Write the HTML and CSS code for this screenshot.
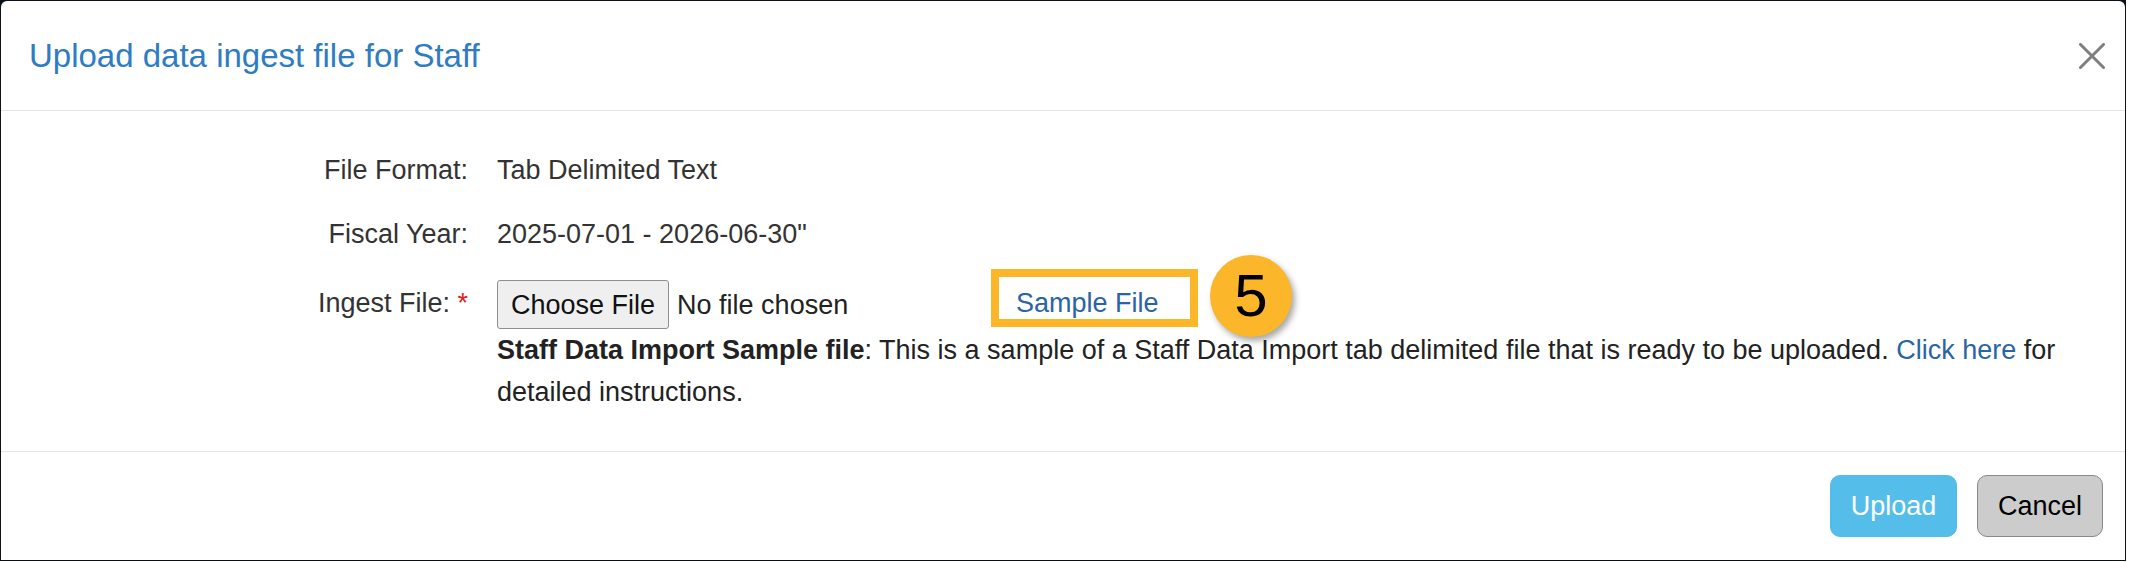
FILE: index.html
```html
<!DOCTYPE html>
<html lang="en">
<head>
<meta charset="utf-8">
<title>Upload data ingest file for Staff</title>
<link rel="stylesheet" href="styles.css">
</head>
<body>
<div class="backdrop">
  <div class="modal">
    <div class="modal-header">
      <h4 class="modal-title">Upload data ingest file for Staff</h4>
      <button class="close" type="button" aria-label="Close">
        <svg width="26" height="26" viewBox="0 0 26 26"><path d="M1.5 1.5 L24.5 24.5 M24.5 1.5 L1.5 24.5" stroke="#7f7f7f" stroke-width="3" stroke-linecap="round" fill="none"/></svg>
      </button>
    </div>
    <div class="modal-body">
      <div class="form-row row-format">
        <div class="label">File Format:</div>
        <div class="value">Tab Delimited Text</div>
      </div>
      <div class="form-row row-year">
        <div class="label">Fiscal Year:</div>
        <div class="value">2025-07-01 - 2026-06-30"</div>
      </div>
      <div class="form-row row-ingest">
        <div class="label label-ingest">Ingest File: <span class="req">*</span></div>
        <div class="value">
          <div class="file-line">
            <span class="file-input">
              <span class="file-btn">Choose File</span>
              <span class="file-name">No file chosen</span>
            </span>
            <span class="sample-wrap">
              <a class="sample-link" href="#">Sample File</a>
              <span class="badge">5</span>
            </span>
          </div>
          <p class="help"><b>Staff Data Import Sample file</b>: This is a sample of a Staff Data Import tab delimited file that is ready to be uploaded. <a href="#">Click here</a> for detailed instructions.</p>
        </div>
      </div>
    </div>
    <div class="modal-footer">
      <button class="btn btn-upload" type="button">Upload</button>
      <button class="btn btn-cancel" type="button">Cancel</button>
    </div>
  </div>
</div>
</body>
</html>
```
FILE: styles.css
```css
html, body {
  margin: 0;
  padding: 0;
  background: #ffffff;
}
body {
  font-family: "Liberation Sans", Arial, sans-serif;
  font-size: 27px;
  color: #333333;
}
.backdrop {
  width: 2124px;
  height: 559px;
  padding: 1px;
  background: #0b1118;
}
.modal {
  height: 559px;
  background: #ffffff;
  border-radius: 6px 6px 0 0;
  display: flex;
  flex-direction: column;
}
.modal-header {
  height: 109px;
  border-bottom: 1px solid #e5e5e5;
  display: flex;
  align-items: center;
  justify-content: space-between;
  padding: 0 20px 0 28px;
}
.modal-title {
  margin: 0;
  font-size: 33px;
  font-weight: normal;
  color: #2e7cc2;
}
.close {
  border: 0;
  background: none;
  padding: 0;
  width: 26px;
  height: 26px;
  display: flex;
}
.modal-body {
  height: 340px;
  box-sizing: border-box;
  padding: 38px 37px 0 0;
}
.form-row {
  display: grid;
  grid-template-columns: 496px 1fr;
  line-height: 42px;
}
.label {
  text-align: right;
  padding-right: 29px;
}
.row-format {
  margin-bottom: 22px;
}
.row-year {
  margin-bottom: 14px;
}
.label-ingest {
  padding-top: 13px;
}
.req {
  color: #e02020;
}
.file-line {
  display: flex;
  align-items: flex-end;
}
.file-input {
  width: 494px;
  display: flex;
  align-items: center;
}
.file-btn {
  box-sizing: border-box;
  height: 49px;
  padding: 0 13px;
  border: 1px solid #8f8f8f;
  border-radius: 3px;
  background: #efefef;
  color: #111111;
  display: flex;
  align-items: center;
}
.file-name {
  margin-left: 8px;
  color: #222222;
}
.sample-wrap {
  position: relative;
  margin-bottom: 2px;
  display: flex;
}
.sample-link {
  box-sizing: border-box;
  height: 58px;
  width: 207px;
  padding: 9px 0 0 17px;
  border: 8px solid #fbb62a;
  display: flex;
  align-items: center;
  color: #2a64a3;
  text-decoration: none;
}
.badge {
  position: absolute;
  left: calc(100% + 12px);
  top: -14px;
  width: 82px;
  height: 82px;
  border-radius: 50%;
  background: #fbb62a;
  box-shadow: 3px 4px 6px rgba(0, 0, 0, 0.35);
  color: #000000;
  font-size: 60px;
  display: flex;
  align-items: center;
  justify-content: center;
}
.help {
  margin: 0;
  line-height: 42px;
  color: #222222;
}
.help b {
  color: #222222;
}
.help a {
  color: #2a64a3;
  text-decoration: none;
}
.modal-footer {
  flex: 1;
  border-top: 1px solid #e5e5e5;
  display: flex;
  align-items: center;
  justify-content: flex-end;
  gap: 20px;
  padding-right: 22px;
}
.btn {
  box-sizing: border-box;
  height: 62px;
  width: 127px;
  border-radius: 10px;
  font-family: "Liberation Sans", Arial, sans-serif;
  font-size: 27px;
  padding: 0;
}
.btn-upload {
  background: #55bde9;
  border: 1px solid #55bde9;
  color: #ffffff;
}
.btn-cancel {
  background: #cccccc;
  border: 1px solid #888888;
  color: #000000;
  width: 126px;
}
```
